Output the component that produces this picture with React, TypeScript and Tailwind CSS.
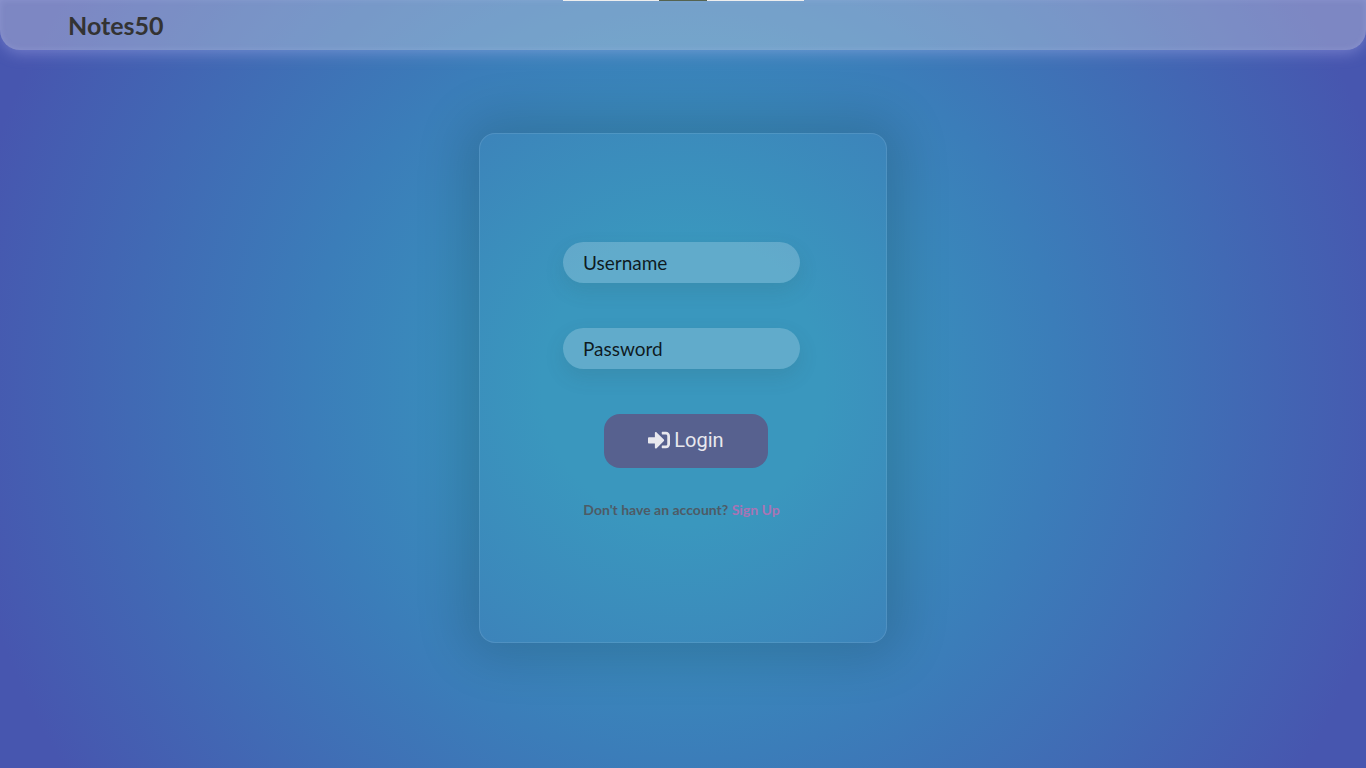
import { FaSignInAlt } from "react-icons/fa";

const fieldClass =
  "block w-full rounded-full bg-white/20 px-5 py-2 font-[Lato,sans-serif] text-[19px] leading-[25px] text-black shadow-[0_8px_20px_rgba(47,79,79,0.13)] outline-none placeholder:text-black/85";

function Field({ name, label, type }: { name: string; label: string; type: string }) {
  return <input name={name} type={type} aria-label={label} placeholder={label} className={fieldClass} />;
}

export default function App() {
  return (
    <div className="relative flex min-h-screen flex-col bg-[radial-gradient(circle,#3896be_18%,#3b7db9_48%,#4756af_93%)] font-[Lato,sans-serif]">
      <header className="flex h-[50px] items-center rounded-b-[20px] bg-[#eeeeee]/32 px-[68px] shadow-[0_4px_16px_-2px_rgba(200,200,255,0.38),inset_0_0_6px_rgba(200,200,255,0.2)]">
        <a href="#" className="text-[25px] leading-8 font-bold text-[#333333]">
          Notes50
        </a>
      </header>
      <div className="absolute top-0 left-1/2 flex h-px w-[241px] -translate-x-[120px] bg-[#eeeeee]">
        <div className="ml-24 w-12 bg-[#55634f]" />
      </div>
      <main className="flex flex-1 flex-col items-center pt-[83px]">
        <form className="h-[510px] w-[408px] rounded-2xl border border-white/10 bg-white/1 px-[83px] pt-[108px] shadow-[0_0_50px_15px_rgba(0,0,0,0.15)]">
          <div className="flex w-[237px] flex-col gap-[45px]">
            <Field name="username" label="Username" type="text" />
            <Field name="password" label="Password" type="password" />
          </div>
          <div className="mt-[45px] flex pl-[41px]">
            <button
              type="button"
              className="flex h-[54px] w-[164px] items-center justify-center gap-1 rounded-2xl bg-[#57618f] pb-0.5 font-[Roboto,sans-serif] text-xl text-[#e8e8ee]"
            >
              <FaSignInAlt className="size-[22px]" />
              Login
            </button>
          </div>
          <p className="mt-8 w-[237px] text-center text-sm leading-5 font-bold whitespace-nowrap text-[#4d5b66]">
            Don't have an account?{" "}
            <a href="#" className="text-[#a974b4]">
              Sign Up
            </a>
          </p>
        </form>
      </main>
    </div>
  );
}
